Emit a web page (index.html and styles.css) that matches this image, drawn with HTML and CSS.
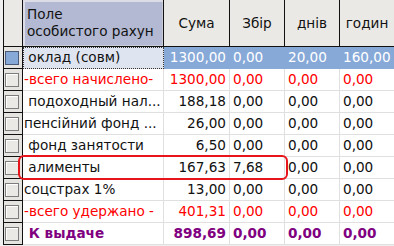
FILE: index.html
```html
<!DOCTYPE html>
<html>
<head>
<meta charset="utf-8">
<link rel="stylesheet" href="styles.css">
</head>
<body>
<div class="wrap">
  <div class="grid">
    <div class="hc ind"></div>
    <div class="hc name-h"><span>Поле<br>особистого рахун</span></div>
    <div class="hc">Сума</div>
    <div class="hc">Збір</div>
    <div class="hc">днів</div>
    <div class="hc">годин</div>

    <div class="ic sel"><i></i></div>
    <div class="c name focus"> оклад (совм)</div>
    <div class="c num selc">1300,00</div>
    <div class="c selc">0,00</div>
    <div class="c selc">20,00</div>
    <div class="c selc">160,00</div>

    <div class="ic"><i></i></div>
    <div class="c name red">-всего начислено-</div>
    <div class="c num red">1300,00</div>
    <div class="c red">0,00</div>
    <div class="c red">0,00</div>
    <div class="c red">0,00</div>

    <div class="ic"><i></i></div>
    <div class="c name"> подоходный нал...</div>
    <div class="c num">188,18</div>
    <div class="c">0,00</div>
    <div class="c">0,00</div>
    <div class="c">0,00</div>

    <div class="ic"><i></i></div>
    <div class="c name">пенсійний фонд ...</div>
    <div class="c num">26,00</div>
    <div class="c">0,00</div>
    <div class="c">0,00</div>
    <div class="c">0,00</div>

    <div class="ic"><i></i></div>
    <div class="c name"> фонд занятости</div>
    <div class="c num">6,50</div>
    <div class="c">0,00</div>
    <div class="c">0,00</div>
    <div class="c">0,00</div>

    <div class="ic"><i></i></div>
    <div class="c name"> алименты</div>
    <div class="c num">167,63</div>
    <div class="c">7,68</div>
    <div class="c">0,00</div>
    <div class="c">0,00</div>

    <div class="ic"><i></i></div>
    <div class="c name">соцстрах 1%</div>
    <div class="c num">13,00</div>
    <div class="c">0,00</div>
    <div class="c">0,00</div>
    <div class="c">0,00</div>

    <div class="ic"><i></i></div>
    <div class="c name red">-всего удержано -</div>
    <div class="c num red">401,31</div>
    <div class="c red">0,00</div>
    <div class="c red">0,00</div>
    <div class="c red">0,00</div>

    <div class="ic"><i></i></div>
    <div class="c name purple"> К выдаче</div>
    <div class="c num purple">898,69</div>
    <div class="c purple">0,00</div>
    <div class="c purple">0,00</div>
    <div class="c purple">0,00</div>
  </div>
  <div class="mark"></div>
</div>
</body>
</html>
```
FILE: styles.css
```css
html, body {
  margin: 0;
  padding: 0;
  background: #efefef;
  width: 394px;
  height: 246px;
  overflow: hidden;
}
.wrap {
  position: relative;
  padding-left: 3px;
  font-family: "DejaVu Sans", sans-serif;
  font-size: 13.6px;
  color: #111;
}
.grid {
  display: grid;
  grid-template-columns: 20px 141px 66px 55px 55px 55px;
  grid-template-rows: 47px repeat(9, 22px);
  background: #fff;
}
.hc {
  box-sizing: border-box;
  background: #ebe9e6;
  border-right: 1px solid #111;
  border-bottom: 1px solid #111;
  display: flex;
  align-items: center;
  justify-content: center;
  line-height: 17px;
}
.hc.ind {
  border-left: 1px solid #111;
}
.hc.name-h {
  justify-content: flex-start;
  background: #b3b9d3;
  box-shadow: inset 2px 2px 0 #dcdde6, inset -1px -1px 0 #c9cbd8;
  padding-left: 4px;
}
.ic {
  box-sizing: border-box;
  background: #e6e4e1;
  border-left: 1px solid #111;
  border-right: 1px solid #111;
  border-bottom: 1px solid #111;
  display: flex;
  align-items: center;
  padding-left: 1px;
}
.ic i {
  display: block;
  width: 14px;
  height: 14px;
  box-sizing: border-box;
  border: 1px solid #7c7c7c;
  background: #ebe9e6;
  box-shadow: inset 1px 1px 0 #fff;
}
.ic.sel i {
  background: #87a9d8;
  border-color: #4a5a78;
  box-shadow: none;
}
.c {
  box-sizing: border-box;
  border-right: 1px solid #e0e0e0;
  border-bottom: 1px solid #e0e0e0;
  line-height: 21px;
  white-space: pre;
  overflow: hidden;
  padding-left: 3px;
}
.c.name {
  padding-left: 1px;
}
.c.num {
  text-align: right;
  padding-right: 3px;
}
.c.focus {
  background: #dfe5f0;
  outline: 1px dotted #333;
  outline-offset: -1px;
}
.c.selc {
  background: #87a9d8;
  color: #fff;
  border-bottom-color: #87a9d8;
  border-right-color: #87a9d8;
}
.red {
  color: #f00;
}
.purple {
  color: #800080;
  font-weight: bold;
}
.mark {
  position: absolute;
  left: 18px;
  top: 155px;
  width: 270px;
  height: 25px;
  box-sizing: border-box;
  border: 2px solid #e8141c;
  border-radius: 6px;
}
```
